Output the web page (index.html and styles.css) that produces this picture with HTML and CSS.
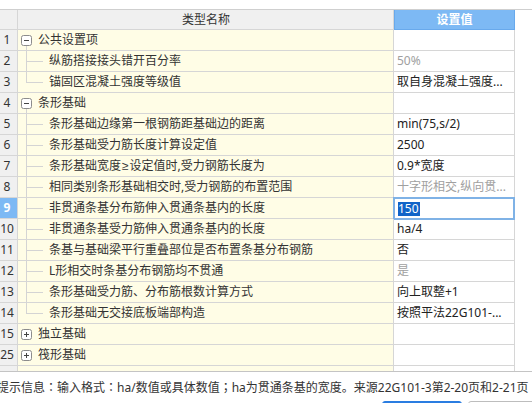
FILE: index.html
```html
<!DOCTYPE html>
<html lang="zh">
<head>
<meta charset="utf-8">
<link rel="stylesheet" href="styles.css">
</head>
<body>
<div class="top"></div>
<div class="grid">
  <div class="row head"><div class="num"></div><div class="name">类型名称</div><div class="val">设置值</div></div>

  <div class="row"><div class="num">1</div><div class="name group open"><svg class="tog" width="11" height="11" viewBox="0 0 11 11"><rect x="0.5" y="0.5" width="10" height="10" rx="2" fill="#fff" stroke="#8c8c8c"/><path d="M3 5.5H8" stroke="#444"/></svg><span class="gtext">公共设置项</span></div><div class="val"></div></div>
  <div class="row"><div class="num">2</div><div class="name child">纵筋搭接接头错开百分率</div><div class="val gray">50%</div></div>
  <div class="row"><div class="num">3</div><div class="name child last">锚固区混凝土强度等级值</div><div class="val">取自身混凝土强度...</div></div>

  <div class="row"><div class="num">4</div><div class="name group open"><svg class="tog" width="11" height="11" viewBox="0 0 11 11"><rect x="0.5" y="0.5" width="10" height="10" rx="2" fill="#fff" stroke="#8c8c8c"/><path d="M3 5.5H8" stroke="#444"/></svg><span class="gtext">条形基础</span></div><div class="val"></div></div>
  <div class="row"><div class="num">5</div><div class="name child">条形基础边缘第一根钢筋距基础边的距离</div><div class="val">min(75,s/2)</div></div>
  <div class="row"><div class="num">6</div><div class="name child">条形基础受力筋长度计算设定值</div><div class="val">2500</div></div>
  <div class="row"><div class="num">7</div><div class="name child">条形基础宽度<span class="sym">≥</span>设定值时,受力钢筋长度为</div><div class="val">0.9*宽度</div></div>
  <div class="row"><div class="num">8</div><div class="name child">相同类别条形基础相交时,受力钢筋的布置范围</div><div class="val gray">十字形相交,纵向贯...</div></div>
  <div class="row sel"><div class="num">9</div><div class="name child">非贯通条基分布筋伸入贯通条基内的长度</div><div class="val edit"><div class="editor"><span class="hl">150</span></div></div></div>
  <div class="row"><div class="num">10</div><div class="name child">非贯通条基受力筋伸入贯通条基内的长度</div><div class="val">ha/4</div></div>
  <div class="row"><div class="num">11</div><div class="name child">条基与基础梁平行重叠部位是否布置条基分布钢筋</div><div class="val">否</div></div>
  <div class="row"><div class="num">12</div><div class="name child">L形相交时条基分布钢筋均不贯通</div><div class="val gray">是</div></div>
  <div class="row"><div class="num">13</div><div class="name child">条形基础受力筋、分布筋根数计算方式</div><div class="val">向上取整+1</div></div>
  <div class="row"><div class="num">14</div><div class="name child last">条形基础无交接底板端部构造</div><div class="val">按照平法22G101-...</div></div>

  <div class="row"><div class="num">15</div><div class="name group"><svg class="tog" width="11" height="11" viewBox="0 0 11 11"><rect x="0.5" y="0.5" width="10" height="10" rx="2" fill="#fff" stroke="#8c8c8c"/><path d="M3 5.5H8M5.5 3V8" stroke="#444"/></svg><span class="gtext">独立基础</span></div><div class="val"></div></div>
  <div class="row"><div class="num">25</div><div class="name group"><svg class="tog" width="11" height="11" viewBox="0 0 11 11"><rect x="0.5" y="0.5" width="10" height="10" rx="2" fill="#fff" stroke="#8c8c8c"/><path d="M3 5.5H8M5.5 3V8" stroke="#444"/></svg><span class="gtext">筏形基础</span></div><div class="val"></div></div>
  <div class="row"><div class="num"></div><div class="name group"><svg class="tog" width="11" height="11" viewBox="0 0 11 11"><rect x="0.5" y="0.5" width="10" height="10" rx="2" fill="#fff" stroke="#8c8c8c"/><path d="M3 5.5H8M5.5 3V8" stroke="#444"/></svg></div><div class="val"></div></div>
</div>
<div class="hint">提示信息<span class="p">：</span>输入格式<span class="p">：</span>ha/数值或具体数值<span class="p">；</span>ha为贯通条基的宽度。来源22G101-3第2-20页和2-21页</div>
<div class="btns"><div class="btn ok"></div><div class="btn cancel"></div></div>
</body>
</html>
```

FILE: styles.css
```css
* { box-sizing: border-box; }
html, body { margin: 0; padding: 0; }
body {
  width: 532px;
  height: 403px;
  overflow: hidden;
  background: #fff;
  font-family: "Noto Sans", "Noto Sans CJK SC", sans-serif;
  font-size: 12px;
  color: #333;
}
.top {
  height: 10px;
  border-bottom: 1px solid #cfcfcf;
}
.grid {
  height: 362px;
  border-bottom: 1px solid #c4c4c4;
  overflow: hidden;
}
.row {
  display: flex;
  height: 21px;
}
.row > div {
  height: 21px;
  border-bottom: 1px solid #d6d6d6;
  border-right: 1px solid #d6d6d6;
  display: flex;
  align-items: center;
  white-space: nowrap;
  overflow: hidden;
  line-height: 1;
}
.head, .head > div { height: 20px; }
.num {
  width: 18px;
  background: #f0f0f0;
  justify-content: center;
  padding-right: 3px;
  color: #333;
}
.name {
  width: 376px;
  background: #fffde6;
  position: relative;
}
.val {
  width: 121px;
  background: #fff;
  padding-left: 3px;
  color: #222;
}
.head .name {
  background: #f0f0f0;
  justify-content: center;
  padding-left: 1px;
}
.head .val {
  background: #7db9f4;
  border: 1px solid #68a9ec;
  border-top: none;
  color: #fff;
  font-weight: bold;
  justify-content: center;
  padding-left: 0;
}
.gray { color: #a0a0a0; }
.sym { font-family: "Liberation Sans", sans-serif; margin: 0 1px; }

.group { padding-left: 3px; }
.tog { display: block; flex: none; margin-top: 1px; }
.gtext { margin-left: 6px; }
.group.open::after {
  content: "";
  position: absolute;
  left: 8px;
  top: 16px;
  bottom: -1px;
  width: 1px;
  background: #d4d4d4;
}
.child { padding-left: 31px; }
.child::before {
  content: "";
  position: absolute;
  left: 8px;
  top: 0;
  bottom: -1px;
  width: 1px;
  background: #d4d4d4;
}
.child.last::before { bottom: auto; height: 11px; }
.child::after {
  content: "";
  position: absolute;
  left: 8px;
  top: 10px;
  width: 17px;
  height: 1px;
  background: #d4d4d4;
}

.sel .num {
  background: #7db9f4;
  color: #fff;
  font-weight: bold;
}
.row > .edit { position: relative; overflow: visible; }
.editor {
  position: absolute;
  left: -1px;
  top: -1px;
  width: 122px;
  height: 23px;
  border: 2px solid #7fb2e6;
  background: #fff;
  padding-left: 3px;
  display: flex;
  align-items: center;
}
.hl {
  display: inline-block;
  background: #1164c8;
  color: #fff;
  height: 14px;
  line-height: 14px;
  padding: 0 1px 0 0;
}

.hint {
  height: 29px;
  display: flex;
  align-items: center;
  margin-left: -3px;
  white-space: nowrap;
  color: #333;
}
.p { font-family: "Noto Sans CJK TC", sans-serif; }
.btns {
  display: flex;
  gap: 6px;
  padding-left: 382px;
}
.btn {
  width: 80px;
  height: 26px;
  border-radius: 3px;
  flex: none;
}
.ok {
  background: #2a7de1;
  border: 1px solid #2a7de1;
}
.cancel {
  background: #fff;
  border: 1px solid #bdbdbd;
}
```
